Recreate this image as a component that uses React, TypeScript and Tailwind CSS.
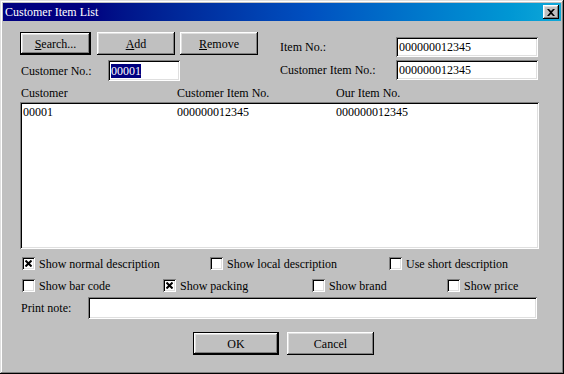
import React from 'react';

const raised =
  'bg-[#c0c0c0] shadow-[inset_-1px_-1px_#000,inset_1px_1px_#fff,inset_-2px_-2px_#808080,inset_2px_2px_#dfdfdf]';
const sunken =
  'bg-white shadow-[inset_1px_1px_#808080,inset_-1px_-1px_#fff,inset_2px_2px_#000,inset_-2px_-2px_#dfdfdf]';

function Button({ children, w, isDefault }: { children: React.ReactNode; w: string; isDefault?: boolean }) {
  if (isDefault) {
    return (
      <div className={`${w} h-[23px] border border-black flex`}>
        <div className={`flex-1 flex items-center justify-center ${raised}`}>{children}</div>
      </div>
    );
  }
  return <div className={`${w} h-[23px] flex items-center justify-center ${raised}`}>{children}</div>;
}

function Checkbox({ label, checked, w }: { label: string; checked?: boolean; w: string }) {
  return (
    <div className={`${w} flex items-center h-[13px]`}>
      <div className={`w-[13px] h-[13px] shrink-0 flex items-center justify-center ${sunken}`}>
        {checked && (
          <svg width="7" height="7" viewBox="0 0 7 7">
            <path d="M0.5 0.5L6.5 6.5M6.5 0.5L0.5 6.5" stroke="#000" strokeWidth="2" />
          </svg>
        )}
      </div>
      <span className="ml-[4px] whitespace-nowrap">{label}</span>
    </div>
  );
}

function Field({ w, h = 'h-[20px]', value, selected }: { w: string; h?: string; value?: string; selected?: boolean }) {
  return (
    <div className={`${w} ${h} ${sunken} flex items-center pl-[3px]`}>
      {value && (
        <span className={selected ? 'bg-[#000080] text-white leading-[14px]' : 'leading-[14px]'}>{value}</span>
      )}
    </div>
  );
}

export default function App() {
  return (
    <div className="w-[564px] h-[374px] bg-[#c0c0c0] p-[3px] flex flex-col font-['Liberation_Serif',serif] text-[12px] leading-none text-black shadow-[inset_-1px_-1px_#000,inset_1px_1px_#dfdfdf,inset_-2px_-2px_#808080,inset_2px_2px_#fff]">
      {/* title bar */}
      <div className="h-[18px] flex items-center justify-between pl-[2px] pr-[2px] bg-gradient-to-r from-[#000080] from-15% via-[#0050c0] via-55% to-[#10a8d8]">
        <span className="text-white text-[12px]">Customer Item List</span>
        <div className={`w-[16px] h-[14px] flex items-center justify-center ${raised}`}>
          <svg width="8" height="7" viewBox="0 0 8 7">
            <path d="M0 0h2l2 2 2-2h2L5 3.5 8 7H6L4 5 2 7H0l3-3.5z" fill="#000" />
          </svg>
        </div>
      </div>

      <div className="flex flex-col pl-[17px]">
        {/* top section */}
        <div className="flex mt-[11px]">
          <div className="w-[260px] flex flex-col">
            <div className="flex">
              <Button w="w-[71px]" isDefault>
                <span>
                  <u>S</u>earch...
                </span>
              </Button>
              <div className="ml-[6px]">
                <Button w="w-[78px]">
                  <span>
                    <u>A</u>dd
                  </span>
                </Button>
              </div>
              <div className="ml-[5px]">
                <Button w="w-[78px]">
                  <span>
                    <u>R</u>emove
                  </span>
                </Button>
              </div>
            </div>
            <div className="flex items-center mt-[5px] h-[21px]">
              <span className="w-[88px] pl-[1px]">Customer No.:</span>
              <Field w="w-[72px]" h="h-[21px]" value="00001" selected />
            </div>
          </div>
          <div className="flex flex-col pt-[5px]">
            <div className="flex items-center h-[20px]">
              <span className="w-[116px]">Item No.:</span>
              <Field w="w-[142px]" value="000000012345" />
            </div>
            <div className="flex items-center h-[20px] mt-[3px]">
              <span className="w-[116px]">Customer Item No.:</span>
              <Field w="w-[142px]" value="000000012345" />
            </div>
          </div>
        </div>

        {/* list headers */}
        <div className="flex items-center h-[18px] mt-[3px] pl-[1px]">
          <span className="w-[156px]">Customer</span>
          <span className="w-[159px]">Customer Item No.</span>
          <span>Our Item No.</span>
        </div>
        <div className={`w-[519px] h-[147px] ${sunken} pt-[3px] pl-[3px]`}>
          <div className="flex h-[13px] items-center">
            <span className="w-[154px]">00001</span>
            <span className="w-[159px]">000000012345</span>
            <span>000000012345</span>
          </div>
        </div>

        {/* options */}
        <div className="flex mt-[8px] pl-[2px]">
          <Checkbox w="w-[188px]" label="Show normal description" checked />
          <Checkbox w="w-[179px]" label="Show local description" />
          <Checkbox w="w-[140px]" label="Use short description" />
        </div>
        <div className="flex mt-[9px] pl-[2px]">
          <Checkbox w="w-[141px]" label="Show bar code" />
          <Checkbox w="w-[149px]" label="Show packing" checked />
          <Checkbox w="w-[135px]" label="Show brand" />
          <Checkbox w="w-[90px]" label="Show price" />
        </div>
        <div className="flex items-center mt-[5px] h-[22px]">
          <span className="w-[68px] pl-[1px]">Print note:</span>
          <Field w="w-[449px]" h="h-[22px]" />
        </div>

        {/* dialog buttons */}
        <div className="flex mt-[13px] ml-[173px]">
          <Button w="w-[86px]" isDefault>
            OK
          </Button>
          <div className="ml-[8px]">
            <Button w="w-[87px]">Cancel</Button>
          </div>
        </div>
      </div>
    </div>
  );
}
